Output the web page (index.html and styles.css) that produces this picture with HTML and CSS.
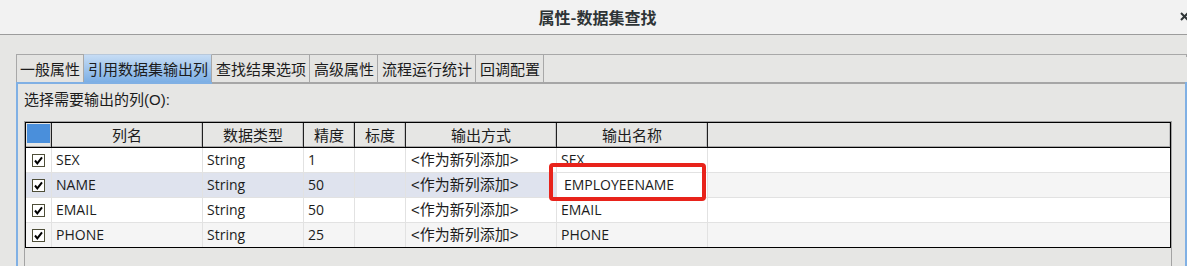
FILE: index.html
```html
<!DOCTYPE html>
<html lang="zh">
<head>
<meta charset="utf-8">
<title>属性-数据集查找</title>
<link rel="stylesheet" href="styles.css">
</head>
<body>
<div class="titlebar">
  <span></span>
  <span class="title">属性-数据集查找</span>
  <span class="close"><svg width="10" height="9" viewBox="0 0 10 9"><path d="M1 1 L8 8 M8 1 L1 8" stroke="#2e3436" stroke-width="2"/></svg></span>
</div>
<div class="dialog">
  <div class="tabs">
    <div class="tab">一般属性</div>
    <div class="tab active">引用数据集输出列</div>
    <div class="tab">查找结果选项</div>
    <div class="tab">高级属性</div>
    <div class="tab">流程运行统计</div>
    <div class="tab">回调配置</div>
    <div class="tab-fill"></div>
  </div>
  <div class="panel">
    <div class="label">选择需要输出的列(O):</div>
    <div class="scroll">
      <div class="table">
        <div class="row head">
          <div class="hc corner"><span class="corner-fill"></span></div>
          <div class="hc">列名</div>
          <div class="hc">数据类型</div>
          <div class="hc">精度</div>
          <div class="hc">标度</div>
          <div class="hc">输出方式</div>
          <div class="hc">输出名称</div>
          <div class="hc"></div>
        </div>
        <div class="row">
          <div class="c chk"><span class="box"><svg width="11" height="11" viewBox="0 0 11 11"><path d="M2 5.5 L4.3 8.3 L9 2.3" fill="none" stroke="#000" stroke-width="2"/></svg></span></div>
          <div class="c lat">SEX</div>
          <div class="c lat">String</div>
          <div class="c lat">1</div>
          <div class="c"></div>
          <div class="c mix">&lt;作为新列添加&gt;</div>
          <div class="c lat">SEX</div>
          <div class="c"></div>
        </div>
        <div class="row alt sel">
          <div class="c chk"><span class="box"><svg width="11" height="11" viewBox="0 0 11 11"><path d="M2 5.5 L4.3 8.3 L9 2.3" fill="none" stroke="#000" stroke-width="2"/></svg></span></div>
          <div class="c lat">NAME</div>
          <div class="c lat">String</div>
          <div class="c lat">50</div>
          <div class="c"></div>
          <div class="c mix">&lt;作为新列添加&gt;</div>
          <div class="c lat editor">EMPLOYEENAME</div>
          <div class="c"></div>
        </div>
        <div class="row">
          <div class="c chk"><span class="box"><svg width="11" height="11" viewBox="0 0 11 11"><path d="M2 5.5 L4.3 8.3 L9 2.3" fill="none" stroke="#000" stroke-width="2"/></svg></span></div>
          <div class="c lat">EMAIL</div>
          <div class="c lat">String</div>
          <div class="c lat">50</div>
          <div class="c"></div>
          <div class="c mix">&lt;作为新列添加&gt;</div>
          <div class="c lat">EMAIL</div>
          <div class="c"></div>
        </div>
        <div class="row alt last">
          <div class="c chk"><span class="box"><svg width="11" height="11" viewBox="0 0 11 11"><path d="M2 5.5 L4.3 8.3 L9 2.3" fill="none" stroke="#000" stroke-width="2"/></svg></span></div>
          <div class="c lat">PHONE</div>
          <div class="c lat">String</div>
          <div class="c lat">25</div>
          <div class="c"></div>
          <div class="c mix">&lt;作为新列添加&gt;</div>
          <div class="c lat">PHONE</div>
          <div class="c"></div>
        </div>
      </div>
    </div>
  </div>
</div>
<div class="annot"></div>
</body>
</html>
```

FILE: styles.css
```css
* { box-sizing: border-box; }
html, body { margin: 0; padding: 0; }
body {
  width: 1187px;
  height: 266px;
  overflow: hidden;
  position: relative;
  background: #e6e6e4;
  font-family: "Liberation Sans", "Noto Sans CJK SC", sans-serif;
  font-size: 15px;
  color: #1c1c1c;
  display: flex;
  flex-direction: column;
}

.titlebar {
  height: 35px;
  flex: none;
  background: #f2f2f2;
  border-bottom: 1px solid #9c9c9c;
  display: grid;
  grid-template-columns: 1fr auto 1fr;
  align-items: center;
}
.title {
  font-family: "Noto Sans CJK SC", sans-serif;
  font-weight: bold;
  font-size: 16px;
  line-height: 20px;
  color: #2e3436;
  padding-left: 8px;
}
.close {
  justify-self: end;
  margin-right: -3px;
  display: flex;
  margin-top: -1px;
}

.dialog {
  flex: 1;
  display: flex;
  flex-direction: column;
  padding: 19px 0 0 16px;
  min-height: 0;
}

.tabs {
  display: flex;
  align-items: flex-start;
  height: 28px;
  flex: none;
}
.tab {
  height: 28px;
  padding: 0 3px;
  border: 1px solid #a8a8a8;
  border-bottom: none;
  background: #e4e4e2;
  font-family: "Noto Sans CJK SC", sans-serif;
  font-size: 15px;
  line-height: 27px;
  white-space: nowrap;
}
.tab + .tab { border-left: none; padding-left: 4px; }
.tab.active {
  background: linear-gradient(#c6dcf4, #7cafe5);
  border-top-color: #b8c8da;
}
.tab-fill {
  flex: 1;
  height: 3px;
  border-top: 1px solid #a8a8a8;
  border-right: 1px solid #a8a8a8;
}

.panel {
  flex: 1;
  display: flex;
  flex-direction: column;
  min-height: 0;
  border-left: 2px solid #80b0e4;
  border-right: 2px solid #80b0e4;
  padding: 2px 13px 0 6px;
  background:
    linear-gradient(to right, #80b0e4 194px, #a6a6a6 194px) top left / 100% 2px no-repeat,
    #e6e6e4;
}
.label {
  margin-top: 7px;
  line-height: 18px;
  height: 18px;
  font-size: 15px;
}
.scroll {
  margin-top: 12px;
  flex: 1;
  border: 1px solid #a3a3a3;
  border-bottom: none;
}

.table {
  border: 1px solid #000;
  background: #fff;
}
.row {
  display: grid;
  grid-template-columns: 25px 151px 101px 51px 51px 151px 151px 1fr;
  height: 25px;
  border-bottom: 1px solid #e2e2e2;
}
.row.last { height: 24px; border-bottom: none; }
.row.head {
  height: 25px;
  border-bottom: 1px solid #000;
  background: #e6e6e4;
}
.hc {
  height: 24px;
  border-left: 1px solid #202020;
  box-shadow: inset 0 -1px #a8a8a8, inset -1px 0 #c4c4c4;
  text-align: center;
  font-family: "Noto Sans CJK SC", sans-serif;
  font-size: 15px;
  line-height: 23px;
  color: #1c1c1c;
}
.hc.corner { border-left: none; padding: 1px 0 4px 1px; }
.corner-fill {
  display: block;
  width: 23px;
  height: 19px;
  background: #4a8fdb;
}

.c {
  height: 24px;
  border-left: 1px solid #e2e2e2;
  padding-left: 4px;
  line-height: 24px;
  white-space: nowrap;
  overflow: hidden;
}
.c.chk {
  border-left: none;
  padding: 0;
  display: flex;
  align-items: center;
  justify-content: center;
}
.box {
  width: 13px;
  height: 13px;
  border: 1px solid #4e4e38;
  background: #fff;
  display: flex;
}
.lat { font-family: "Open Sans", "Liberation Sans", sans-serif; font-size: 14px; }
.mix { font-size: 15px; padding-left: 5px; }
.row.alt .c { background: #f5f5f5; }
.row.sel .c { background: #dfe3ee; }
.row.sel .c:nth-child(n+7) { background: #f5f5f5; }
.row.sel .c.editor { background: #fff; padding-left: 7px; }

.annot {
  position: absolute;
  left: 549px;
  top: 163px;
  width: 157px;
  height: 38px;
  border: 4px solid #e8231b;
  border-radius: 4px;
}
```
